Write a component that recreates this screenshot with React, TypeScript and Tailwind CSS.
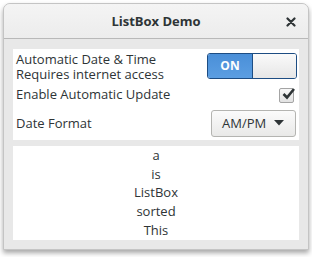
import React from "react";

export default function App() {
  const items = ["a", "is", "ListBox", "sorted", "This"];
  return (
    <div className="w-[312px] h-[257px] bg-white pt-[3px] pl-[3px]" style={{ fontFamily: '"Open Sans", "Noto Sans", sans-serif' }}>
      <div className="w-[306px] h-[247px] flex flex-col rounded-t-[7px] border border-[#c4c4c4] bg-[#e8e8e8] shadow-[0_3px_5px_rgba(0,0,0,0.35)] overflow-hidden text-[#2e3436]">
        {/* title bar */}
        <div className="h-[35px] shrink-0 flex items-center relative bg-gradient-to-b from-[#f4f4f4] to-[#ececec] border-b border-[#b8b8b8]">
          <div className="flex-1 text-center text-[13px] font-bold leading-none pt-[1px]">ListBox Demo</div>
          <svg className="absolute right-[12px] top-[13px]" width="10" height="10" viewBox="0 0 10 10">
            <path d="M1.5 1.5 L8.5 8.5 M8.5 1.5 L1.5 8.5" stroke="#2e3436" strokeWidth="2.2" strokeLinecap="round" />
          </svg>
        </div>
        {/* content */}
        <div className="flex-1 flex flex-col px-[9px] pt-[10px] pb-[8px] gap-[6px]">
          <div className="bg-white h-[91px] flex flex-col">
            <div className="h-[34px] flex items-center justify-between pl-[3px] pr-[2px]">
              <div className="text-[13px] leading-[15px] mt-[1px]">
                <div>Automatic Date &amp; Time</div>
                <div>Requires internet access</div>
              </div>
              <div className="w-[90px] h-[26px] flex rounded-[3px] border border-[#1d4d83] overflow-hidden">
                <div className="w-[45px] bg-gradient-to-b from-[#4a8fd8] to-[#5b9ee2] flex items-center justify-center text-white text-[12px] font-bold border-r border-[#1d4d83]">ON</div>
                <div className="flex-1 bg-gradient-to-b from-[#fafafa] to-[#e6e6e6]"></div>
              </div>
            </div>
            <div className="h-[23px] flex items-center justify-between pl-[3px] pr-[5px]">
              <div className="text-[13px] leading-none">Enable Automatic Update</div>
              <div className="w-[15px] h-[15px] mt-[1px] rounded-[2px] border border-[#a4a4a4] bg-gradient-to-b from-[#f8f8f8] to-[#e2e2e2] relative">
                <svg className="absolute left-[1px] top-[-3px]" width="15" height="15" viewBox="0 0 15 15">
                  <path d="M2.5 8 L6 11.5 L13 3" fill="none" stroke="#2e3436" strokeWidth="2.6" />
                </svg>
              </div>
            </div>
            <div className="h-[34px] flex items-center justify-between pl-[3px] pr-[3px]">
              <div className="text-[13px] leading-none">Date Format</div>
              <div className="w-[85px] h-[27px] rounded-[3px] border border-[#b4b4b1] bg-gradient-to-b from-[#fbfbfb] to-[#e9e9e8] flex items-center pl-[10px] pr-[11px] justify-between">
                <span className="text-[13px] leading-none">AM/PM</span>
                <svg width="10" height="6" viewBox="0 0 10 6">
                  <path d="M0 0 L10 0 L5 5.5 Z" fill="#2e3436" />
                </svg>
              </div>
            </div>
          </div>
          <div className="bg-white h-[94px] flex flex-col">
            {items.map((t) => (
              <div key={t} className="h-[19px] flex items-center justify-center text-[13px] leading-none">{t}</div>
            ))}
          </div>
        </div>
      </div>
    </div>
  );
}
